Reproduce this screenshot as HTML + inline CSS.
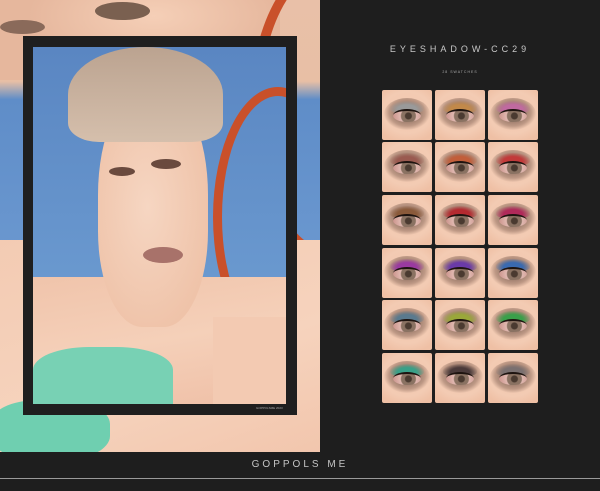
<!DOCTYPE html>
<html><head><style>
*{margin:0;padding:0;box-sizing:border-box}
body{width:600px;height:491px;background:#1e1e1e;position:relative;overflow:hidden;font-family:"Liberation Sans",sans-serif}
.a{position:absolute}
.sw{position:absolute;width:50px;height:50px;border-radius:2px;overflow:hidden;background:radial-gradient(ellipse 70% 60% at 50% 45%,#f2c7ae,#f3cbb3 70%,#efc0a5)}
.sw .dk{position:absolute;left:2px;top:8px;width:46px;height:32px;border-radius:50%;background:radial-gradient(ellipse at 50% 45%,rgba(60,40,35,.75),rgba(90,60,50,.35) 55%,transparent 72%)}
.sw .sh{position:absolute;left:8px;top:11px;width:34px;height:12px;border-radius:50% 50% 30% 30%;}
.sw .ey{position:absolute;left:11px;top:19px;width:28px;height:13px;border-radius:50%;background:radial-gradient(circle at 55% 45%,#4a3a30 0 3px,#8a7262 4px 7px,#e0b8b0 8px,#c99088 100%);border-top:2px solid #1e1410}
</style></head><body>
<div class="a" style="left:0;top:0;width:320px;height:452px;background:linear-gradient(180deg,#e9c0a8 0,#e8bfa5 18%,#5f8dc8 22%,#6a97cf 55%,#f1c4ad 60%,#f4c9b1 100%);overflow:hidden">
 <div class="a" style="left:0;top:0;width:280px;height:80px;background:radial-gradient(ellipse 45% 70% at 55% 20%,#f5cfb7,#e6b79d)"></div>
 <div class="a" style="left:0;top:20px;width:45px;height:14px;border-radius:50%;background:#8a6a5a"></div>
 <div class="a" style="left:95px;top:2px;width:55px;height:18px;border-radius:50%;background:#7a6050"></div>
 <div class="a" style="left:250px;top:-40px;width:160px;height:300px;border:10px solid #c9502a;border-radius:50%"></div>
 <div class="a" style="left:0;top:240px;width:320px;height:212px;background:linear-gradient(160deg,#f3cbb3,#f6d3bd 60%,#f2c6ad)"></div>
 <div class="a" style="left:-10px;top:400px;width:120px;height:60px;border-radius:40%;background:#6fcfb0"></div>
</div>
<div class="a" style="left:23px;top:36px;width:274px;height:379px;background:#1f1f1f"></div>
<div class="a" style="left:33px;top:47px;width:253px;height:357px;overflow:hidden;background:linear-gradient(180deg,#5a86c2,#6b9ad0 70%,#7aa6d8)">
 <div class="a" style="left:180px;top:40px;width:130px;height:260px;border:9px solid #c9502a;border-radius:50%"></div>
 <div class="a" style="left:0;top:230px;width:253px;height:127px;background:linear-gradient(170deg,#f0c4ab,#f5d0b9 50%,#efbfa6)"></div>
 <div class="a" style="left:65px;top:40px;width:110px;height:240px;border-radius:45% 45% 40% 40%;background:radial-gradient(ellipse at 45% 50%,#f6d6c2,#efc3a9 75%)"></div>
 <div class="a" style="left:35px;top:0;width:155px;height:95px;border-radius:50% 50% 20% 20%;background:linear-gradient(180deg,#bba390,#d5bfac)"></div>
 <div class="a" style="left:76px;top:120px;width:26px;height:9px;border-radius:50%;background:#6a4a3e"></div>
 <div class="a" style="left:118px;top:112px;width:30px;height:10px;border-radius:50%;background:#6a4a3e"></div>
 <div class="a" style="left:110px;top:200px;width:40px;height:16px;border-radius:50%;background:#a8726a"></div>
 <div class="a" style="left:0;top:300px;width:140px;height:57px;border-radius:40% 40% 0 0;background:#78d1b4"></div>
 <div class="a" style="left:180px;top:270px;width:73px;height:87px;background:#f3cab2"></div>
</div>
<div class="a" style="left:256px;top:406px;font-size:3px;color:#aaa">GOPPOLSME 2023</div>
<div class="a" style="left:320px;top:0;width:280px;height:452px;background:#1e1e1e"></div>
<div class="a" style="left:320px;top:44px;width:280px;text-align:center;color:#c8c8c8;font-size:9px;letter-spacing:4px">EYESHADOW-CC29</div>
<div class="a" style="left:320px;top:70px;width:280px;text-align:center;color:#aaa;font-size:3.5px;letter-spacing:1px">28 SWATCHES</div>
<div id="g"></div>
<div class="a" style="left:0;top:459px;width:600px;text-align:center;color:#c4c4c4;font-size:10px;letter-spacing:3px">GOPPOLS ME</div>
<div class="a" style="left:0;top:478px;width:600px;height:1px;background:#9a9a9a"></div>
<script>
var cols=[["#9a9a9a","#c2894a","#c06aa0"],["#9a5a50","#c25e3a","#c23a3a"],["#8a5a3a","#b42a30","#b02a5a"],["#9a3aa0","#6a3aa8","#3a6ab0"],["#5a7a8e","#9aa83a","#3aa04a"],["#3aa088","#4a3a3a","#7a7070"]];
var xs=[382,435,488],ys=[90,142,195,248,300,353],h="";
for(var r=0;r<6;r++)for(var c=0;c<3;c++){h+='<div class="sw" style="left:'+xs[c]+'px;top:'+ys[r]+'px"><div class="dk"></div><div class="sh" style="background:radial-gradient(ellipse at 50% 70%,'+cols[r][c]+' 0 40%,transparent 75%)"></div><div class="ey"></div></div>';}
document.getElementById("g").innerHTML=h;
</script>
</body></html>
